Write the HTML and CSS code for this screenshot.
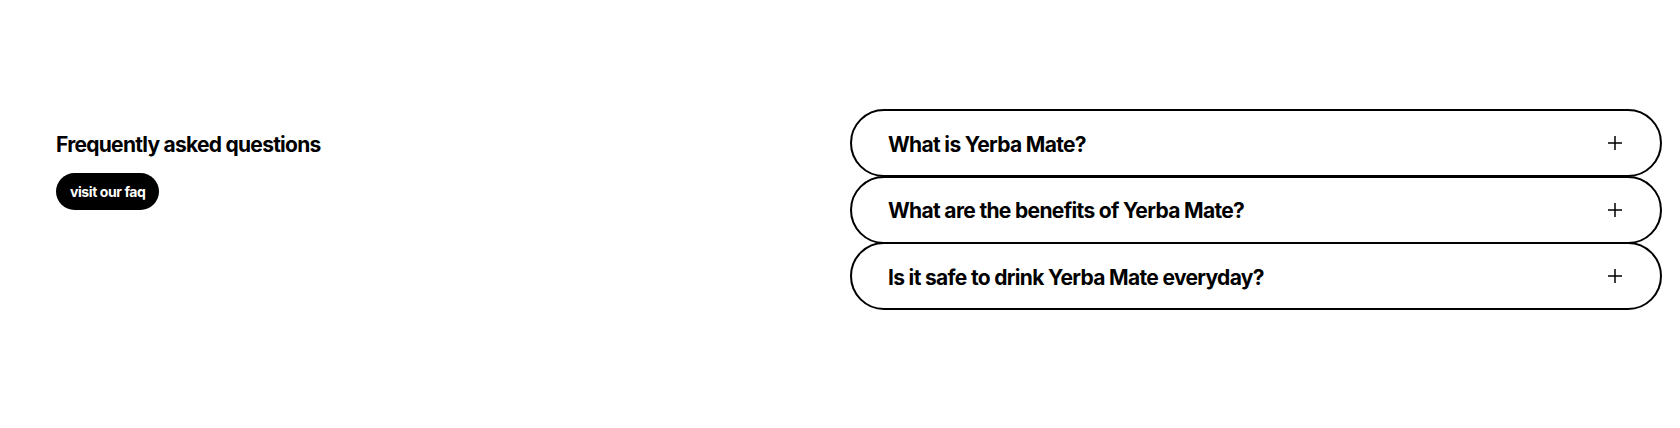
FILE: index.html
```html
<!DOCTYPE html>
<html lang="en">
  <head>
    <meta charset="UTF-8" />
    <meta name="viewport" content="width=device-width, initial-scale=1.0" />
    <title>Yerba Mate - FAQ</title>
    <link rel="stylesheet" href="styles.css">
  </head>
  <body>
    <section class="faq">
      <div class="faq-intro">
        <h2 class="faq-title">Frequently asked questions</h2>
        <a href="#" class="faq-button">visit our faq</a>
      </div>

      <div class="faq-list">
        <div class="faq-item">
          <span class="faq-question">What is Yerba Mate?</span>
          <svg class="faq-icon" viewBox="0 0 14 14" width="14" height="14">
            <path d="M7 0v14M0 7h14" />
          </svg>
        </div>
        <div class="faq-item">
          <span class="faq-question">What are the benefits of Yerba Mate?</span>
          <svg class="faq-icon" viewBox="0 0 14 14" width="14" height="14">
            <path d="M7 0v14M0 7h14" />
          </svg>
        </div>
        <div class="faq-item">
          <span class="faq-question">Is it safe to drink Yerba Mate everyday?</span>
          <svg class="faq-icon" viewBox="0 0 14 14" width="14" height="14">
            <path d="M7 0v14M0 7h14" />
          </svg>
        </div>
      </div>
    </section>
  </body>
</html>
```

FILE: styles.css
```css
* {
  margin: 0;
  padding: 0;
  box-sizing: border-box;
}

body {
  font-family: Inter, "Noto Sans", sans-serif;
  background: #fff;
  color: #000;
}

.faq {
  display: grid;
  grid-template-columns: 1fr 812px;
  height: 428px;
  padding: 109px 18px 0 56px;
}

.faq-intro {
  display: flex;
  flex-direction: column;
  align-items: flex-start;
  padding-top: 23px;
}

.faq-title {
  font-size: 21px;
  font-weight: 700;
  letter-spacing: -0.035em;
  line-height: 1.2;
  margin-bottom: 16px;
}

.faq-button {
  display: inline-flex;
  align-items: center;
  height: 37px;
  padding: 0 14px;
  border-radius: 999px;
  background: #000;
  color: #fff;
  font-size: 14px;
  font-weight: 700;
  letter-spacing: -0.03em;
  text-decoration: none;
}

.faq-list {
  display: flex;
  flex-direction: column;
}

.faq-item {
  display: flex;
  align-items: center;
  justify-content: space-between;
  height: 68px;
  padding: 0 38px 0 36px;
  border: 2px solid #000;
  border-radius: 999px;
}

.faq-item + .faq-item {
  margin-top: -1.5px;
}

.faq-question {
  font-size: 21px;
  font-weight: 700;
  letter-spacing: -0.032em;
  padding-top: 2px;
}

.faq-icon {
  stroke: #000;
  stroke-width: 1.5;
  fill: none;
}
```
